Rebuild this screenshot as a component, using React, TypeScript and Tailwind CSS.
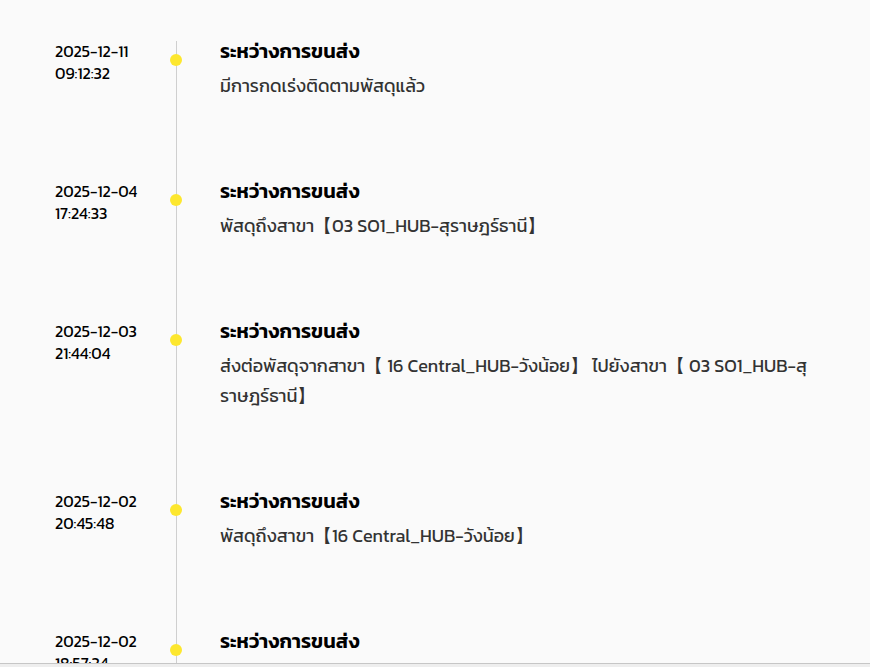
import React from "react";

interface TrackItem {
    date: string;
    time: string;
    status: string;
    detail: React.ReactNode;
}

const items: TrackItem[] = [
    { date: "2025-12-11", time: "09:12:32", status: "ระหว่างการขนส่ง", detail: "มีการกดเร่งติดตามพัสดุแล้ว" },
    { date: "2025-12-04", time: "17:24:33", status: "ระหว่างการขนส่ง", detail: "พัสดุถึงสาขา【03 SO1_HUB-สุราษฎร์ธานี】" },
    {
        date: "2025-12-03",
        time: "21:44:04",
        status: "ระหว่างการขนส่ง",
        detail: (
            <>
                ส่งต่อพัสดุจากสาขา【 16 Central_HUB-วังน้อย】 ไปยังสาขา【 03{" "}
                <span className="whitespace-nowrap">SO1_HUB-สุ</span>
                <wbr />
                ราษฎร์ธานี】
            </>
        ),
    },
    { date: "2025-12-02", time: "20:45:48", status: "ระหว่างการขนส่ง", detail: "พัสดุถึงสาขา【16 Central_HUB-วังน้อย】" },
    { date: "2025-12-02", time: "18:57:34", status: "ระหว่างการขนส่ง", detail: "รับพัสดุเข้าระบบแล้ว" },
];

const Row = ({ item, first }: { item: TrackItem; first: boolean }) => {
    return (
        <div className="flex">
            <div className="w-[176px] shrink-0 pl-[55px] pt-[4px] text-[16px] leading-[22px] text-black">
                <p>{item.date}</p>
                <p>{item.time}</p>
            </div>
            <div className="relative w-[1px] shrink-0">
                <div className={`absolute left-0 w-[1px] bg-[#cfcfcf] ${first ? "top-[5px]" : "top-0"} bottom-0`} />
                <div className="absolute left-[-6px] top-[18px] h-[12px] w-[12px] rounded-full bg-[#fde72e]" />
            </div>
            <div className="flex-1 pl-[43px] pr-[38px] pb-[75px]">
                <p className="text-[20px] leading-[30px] font-semibold text-black">{item.status}</p>
                <p className="mt-[5px] text-[18px] leading-[30px] text-[#333]">{item.detail}</p>
            </div>
        </div>
    );
};

const App = () => {
    return (
        <div className="flex h-screen flex-col bg-[#fafafa]" style={{ fontFamily: "Kanit, 'Noto Sans Thai', 'Noto Sans', sans-serif" }}>
            <div className="h-[663px] shrink-0 overflow-hidden pt-[36px]">
                {items.map((item, i) => (
                    <Row key={i} item={item} first={i === 0} />
                ))}
            </div>
            <div className="flex-1 border-t border-[#c6c6c6] bg-[#eeeeee]" />
        </div>
    );
};

export default App;
